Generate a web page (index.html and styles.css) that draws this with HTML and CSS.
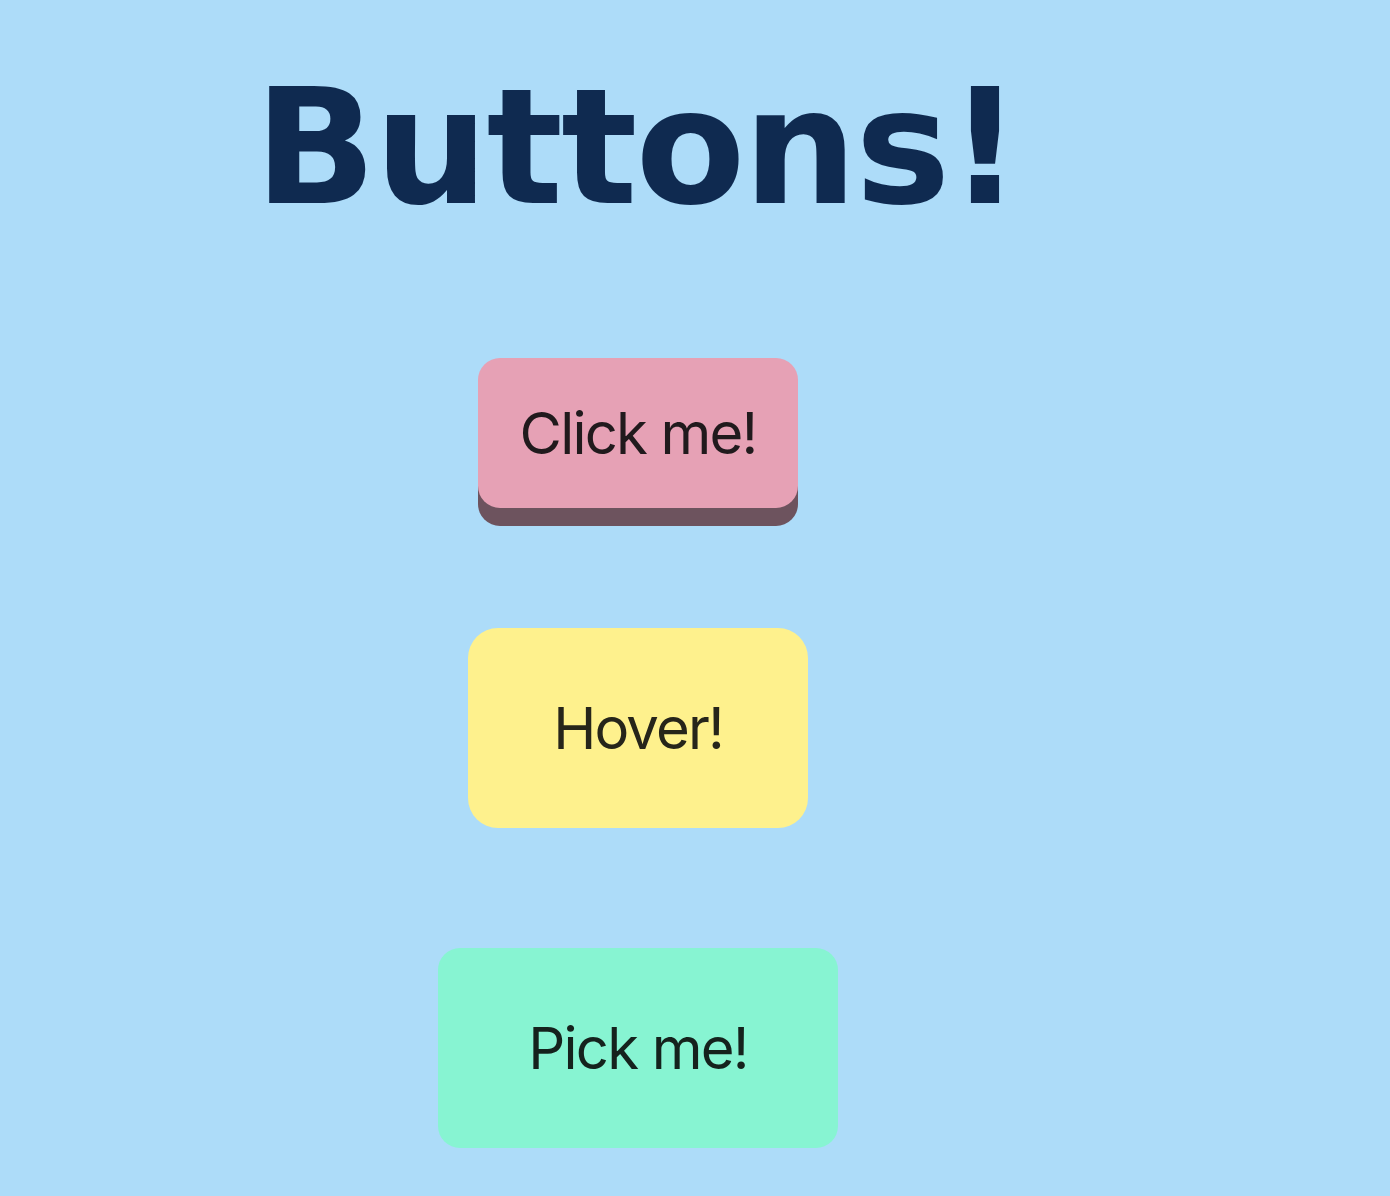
FILE: index.html
```html
<!DOCTYPE html>
<html lang="en">
<head>
<meta charset="utf-8">
<title>Buttons!</title>
<link rel="stylesheet" href="styles.css">
</head>
<body>
<main class="page">
  <h1 class="title">Buttons!</h1>
  <div class="buttons">
    <button class="btn btn-click">Click me!</button>
    <button class="btn btn-hover">Hover!</button>
    <button class="btn btn-pick">Pick me!</button>
  </div>
</main>
</body>
</html>
```

FILE: styles.css
```css
html, body {
  background: #addcf9;
}
body {
  margin: 0 8px;
}
.page {
  width: 1260px;
  display: flex;
  flex-direction: column;
  align-items: center;
  padding-top: 55px;
}
.title {
  margin: 0 0 0 -2px;
  font-family: "DejaVu Sans", sans-serif;
  font-weight: 700;
  font-size: 160px;
  line-height: 186px;
  letter-spacing: -2px;
  color: #0f2a50;
}
.buttons {
  margin-top: 117px;
  display: flex;
  flex-direction: column;
  align-items: center;
  gap: 120px;
}
.btn {
  border: none;
  padding: 0;
  font-family: Inter, "Noto Sans", sans-serif;
  font-size: 58px;
  letter-spacing: -1.8px;
  font-weight: 400;
  display: flex;
  align-items: center;
  justify-content: center;
}
.btn-click {
  width: 320px;
  height: 150px;
  border-radius: 22px;
  background: #e6a1b5;
  color: #211a1d;
  box-shadow: 0 18px 0 #6d535e;
}
.btn-hover {
  width: 340px;
  height: 200px;
  border-radius: 30px;
  background: #fef18d;
  color: #26251a;
}
.btn-pick {
  width: 400px;
  height: 200px;
  border-radius: 22px;
  background: #87f4d2;
  color: #15221d;
}
```
